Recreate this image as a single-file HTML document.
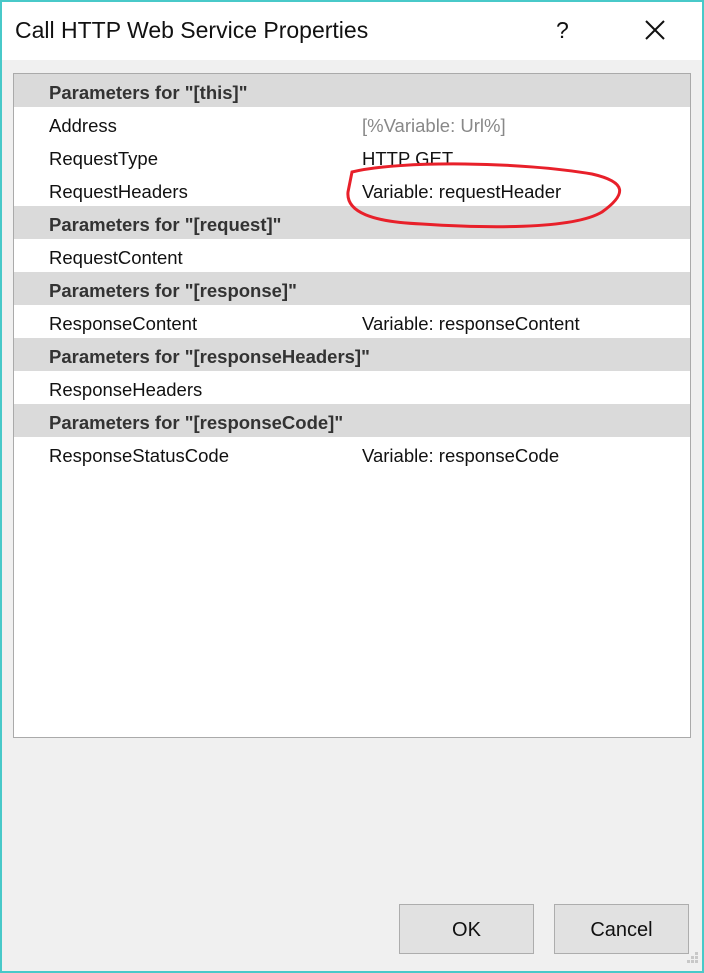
<!DOCTYPE html>
<html><head><style>
body{margin:0;width:704px;height:973px;overflow:hidden;font-family:"Liberation Sans",sans-serif;}
.win{position:absolute;left:0;top:0;width:700px;height:969px;border:2px solid #48c9c9;background:#f0f0f0;}
.title{position:absolute;left:0;top:0;width:700px;height:58px;background:#fff;}
.title span{position:absolute;left:13px;top:15px;font-size:23px;color:#111;}
.grid{position:absolute;left:11px;top:71px;width:676px;height:663px;border:1px solid #aaa;background:#fff;}
.row{position:absolute;left:0;width:676px;height:33px;font-size:18.5px;line-height:37px;color:#111;}
.row.h{background:#dadada;font-weight:bold;color:#333;}
.row .k{position:absolute;left:35px;}
.row .v{position:absolute;left:348px;}
.btn{position:absolute;top:902px;width:133px;height:48px;border:1px solid #adadad;background:#e1e1e1;font-size:20px;text-align:center;line-height:50px;color:#111;}
</style></head><body>
<div class="win">
<div class="title"><span>Call HTTP Web Service Properties</span>
<span style="left:554px">?</span>
<svg style="position:absolute;left:642px;top:17px" width="22" height="22"><path d="M2 2L20 20M20 2L2 20" stroke="#111" stroke-width="2"/></svg></div>
<div class="grid">
<div class="row h" style="top:0"><span class="k">Parameters for "[this]"</span></div>
<div class="row" style="top:33px"><span class="k">Address</span><span class="v" style="color:#888">[%Variable: Url%]</span></div>
<div class="row" style="top:66px"><span class="k">RequestType</span><span class="v">HTTP GET</span></div>
<div class="row" style="top:99px"><span class="k">RequestHeaders</span><span class="v">Variable: requestHeader</span></div>
<div class="row h" style="top:132px"><span class="k">Parameters for "[request]"</span></div>
<div class="row" style="top:165px"><span class="k">RequestContent</span></div>
<div class="row h" style="top:198px"><span class="k">Parameters for "[response]"</span></div>
<div class="row" style="top:231px"><span class="k">ResponseContent</span><span class="v">Variable: responseContent</span></div>
<div class="row h" style="top:264px"><span class="k">Parameters for "[responseHeaders]"</span></div>
<div class="row" style="top:297px"><span class="k">ResponseHeaders</span></div>
<div class="row h" style="top:330px"><span class="k">Parameters for "[responseCode]"</span></div>
<div class="row" style="top:363px"><span class="k">ResponseStatusCode</span><span class="v">Variable: responseCode</span></div>
</div>
<svg style="position:absolute;left:0;top:0" width="700" height="969"><path d="M350 170 C400 158 520 160 590 172 C625 180 625 192 600 210 C570 228 480 226 420 222 C370 220 344 210 346 190 Z" fill="none" stroke="#e8202a" stroke-width="3"/>
<g fill="#c8c8c8"><rect x="693" y="950" width="3" height="3"/><rect x="689" y="954" width="3" height="3"/><rect x="693" y="954" width="3" height="3"/><rect x="685" y="958" width="3" height="3"/><rect x="689" y="958" width="3" height="3"/><rect x="693" y="958" width="3" height="3"/></g></svg>
<div class="btn" style="left:397px">OK</div>
<div class="btn" style="left:552px">Cancel</div>
</div>
</body></html>
